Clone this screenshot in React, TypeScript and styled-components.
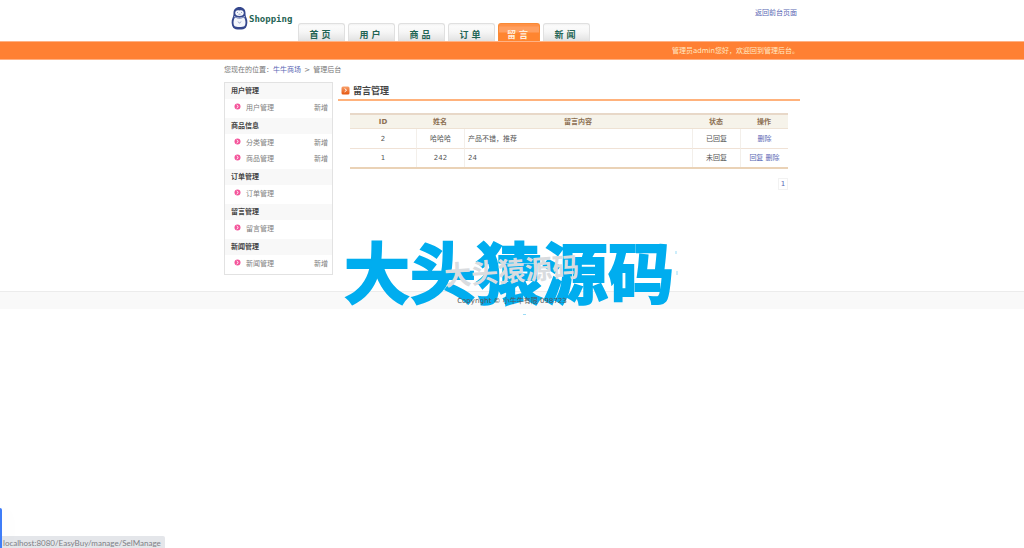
import React from "react";
import styled, { createGlobalStyle } from "styled-components";

const GlobalStyle = createGlobalStyle`
  * { box-sizing: border-box; }
  body {
    margin: 0;
    background: #fff;
    color: #555;
    font: 7px/16px "DejaVu Sans", "Noto Sans CJK SC", sans-serif;
  }
  a { color: #5a68b4; text-decoration: none; }
  ul, dl, dd, h1, h2, p { margin: 0; padding: 0; list-style: none; }
`;

const Page = styled.div`
  position: relative;
  min-height: 100vh;
`;

const Wrap = styled.div`
  width: 576px;
  max-width: 100%;
  margin: 0 auto;
`;

const Header = styled(Wrap)`
  display: flex;
  height: 41px;
`;

const Logo = styled.a`
  display: flex;
  align-items: flex-start;
  gap: 1px;
  width: 74px;
  padding: 6px 0 0 7px;
  flex: none;
`;

const Brand = styled.span`
  padding-top: 5px;
  color: #1f6453;
  font: bold 9px/16px "DejaVu Sans Mono", monospace;
`;

const Nav = styled.nav`
  display: flex;
  align-items: flex-end;
  gap: 3px;
  flex: 1;
`;

const Tab = styled.a<{ $active?: boolean }>`
  width: ${(p) => (p.$active ? 42 : 47)}px;
  height: 18px;
  padding: 3px 3px 0 0;
  border: 1px solid ${(p) => (p.$active ? "#f98a35" : "#e0e0e0")};
  border-bottom: 0;
  border-radius: 3px 3px 0 0;
  background: ${(p) =>
    p.$active
      ? "linear-gradient(#ff9147 0 2px, #ff9f60 3px 8px, #ff8530 9px)"
      : "linear-gradient(#f1f1f1 0, #fbfbfb 2px, #f6f6f6 8px, #e2e2e2)"};
  color: ${(p) => (p.$active ? "#ffeedd" : "#1f6453")};
  font-size: 9px;
  line-height: 16px;
  font-weight: bold;
  text-align: center;
`;

const BackLink = styled.a`
  padding: 5px 3px 0 0;
`;

const Bar = styled.div`
  height: 19px;
  border-top: 1px solid #ffb184;
  border-bottom: 1px solid #ffb184;
  background: #ff8033;
`;

const Welcome = styled(Wrap)`
  padding-right: 1px;
  color: #ffe9c4;
  line-height: 18px;
  text-align: right;
`;

const Crumbs = styled(Wrap)`
  padding: 2px 0 4px;
  color: #777;
  span { margin: 0 1px; }
`;

const Columns = styled(Wrap)`
  display: flex;
  align-items: flex-start;
  gap: 5px;
`;

const Sidebar = styled.aside`
  width: 109px;
  flex: none;
  border: 1px solid #e2e2e2;
`;

const GroupTitle = styled.h2`
  padding-left: 6px;
  background: #f8f8f8;
  color: #444;
  font-size: 7px;
  line-height: 16px;
`;

const GroupList = styled.ul`
  padding: 1px 0 2px;
`;

const GroupItem = styled.li`
  display: flex;
  align-items: center;
  padding: 0 4px 0 9px;
  a { color: #808080; }
  svg { margin: 0 5px 4px 0; }
  a:nth-of-type(2) { margin-left: auto; }
`;

const Main = styled.main`
  flex: 1;
`;

const Title = styled.h1`
  display: flex;
  align-items: center;
  gap: 3px;
  height: 19px;
  padding-left: 3px;
  border-bottom: 2px solid #ffb27c;
  color: #444;
  font-size: 9px;
  svg { margin-bottom: 1px; }
`;

const Body = styled.div`
  padding: 12px 12px 0;
`;

const Table = styled.table`
  width: 100%;
  table-layout: fixed;
  border-collapse: separate;
  border-spacing: 0;
  border-top: 2px solid #e8d8c8;
  border-bottom: 2px solid #ead2b6;
`;

const Th = styled.th<{ $w?: number }>`
  width: ${(p) => (p.$w ? p.$w + "px" : "auto")};
  height: 14px;
  padding: 0;
  background: #f6f3ea;
  border-bottom: 1px solid #eee2d4;
  color: #8c6f52;
  line-height: 12px;
`;

const Td = styled.td<{ $left?: boolean }>`
  height: 19px;
  padding: 0 3px;
  border-left: 1px solid #f3efea;
  text-align: ${(p) => (p.$left ? "left" : "center")};
  &:first-child { border-left: 0; }
  tr + tr > & { border-top: 1px solid #f0e2d6; }
`;

const Pager = styled.div`
  display: flex;
  justify-content: flex-end;
  padding-top: 9px;
`;

const PageLink = styled.a`
  width: 10px;
  border: 1px solid #f2f2f2;
  line-height: 10px;
  text-align: center;
`;

const Footer = styled.footer`
  margin-top: 16px;
  height: 18px;
  border-top: 1px solid #ececec;
  background: #f9f9f9;
  line-height: 18px;
  text-align: center;
  span { position: relative; z-index: 1; }
`;

const Watermark = styled.div`
  position: absolute;
  top: 226px;
  left: calc(50% - 168px);
  width: 340px;
  height: 95px;
  pointer-events: none;
  white-space: nowrap;
  font-family: "Noto Sans CJK SC", sans-serif;
`;

const BigMark = styled.p`
  color: #00adef;
  font-size: 66px;
  font-weight: bold;
  line-height: 86px;
  -webkit-text-stroke: 2px #00adef;
`;

const SmallMark = styled.p`
  position: absolute;
  top: 28px;
  left: 100px;
  color: #d9dcdf;
  font-size: 27px;
  font-weight: bold;
  line-height: 32px;
  transform: rotate(-4deg);
`;

const Specks = styled.svg`
  position: absolute;
  inset: 0;
`;

const Status = styled.div`
  position: fixed;
  left: 0;
  bottom: 0;
  height: 12px;
  padding: 0 4px 0 3px;
  border-radius: 0 2px 0 0;
  background: #e4e6ea;
  color: #7d8085;
  font: 8px/15px Lato, sans-serif;
`;

const SideHandle = styled.div`
  position: fixed;
  left: 0;
  bottom: 0;
  width: 2px;
  height: 40px;
  border-radius: 0 2px 0 0;
  background: #3f7df8;
  box-shadow: 0 0 24px rgba(0, 0, 0, 0.12);
  z-index: 1;
`;

const Penguin = () => (
  <svg width="17" height="25" viewBox="0 0 17 25" aria-hidden="true">
    <path d="M8.500 1C4.800 1 2.500 3.500 2.500 7c0 2-.2 3.300-1 5C.2 14.500.3 19 2.200 21.700 4 24.200 13 24.200 14.800 21.700c1.900-2.700 2-7.200.7-9.700C14.700 10.300 14.500 9 14.500 7c0-3.500-2.300-6-6-6z" fill="#35478d" />
    <path d="M8.500 4.500c-2.500-1-4.300.3-4.300 2.500 0 2 1.700 3 4.300 3s4.300-1 4.300-3c0-2.200-1.800-3.500-4.300-2.500z" fill="#f4f6fb" />
    <path d="M3.800 11.500c2.900 1.400 6.500 1.400 9.400 0 1.500 2.600 1.800 6.500.4 8.400-2 1.500-8.200 1.500-10.200 0-1.400-1.900-1.100-5.800.4-8.400z" fill="#f4f6fb" />
    <path d="M6 6.500h1M10 6.500h1M7.500 8.200h2M7 15.500l1.500 1.800 1.500-1.800" stroke="#7d8bbd" fill="none" strokeWidth=".8" />
    <path d="M2.900 10.300c3 2 8.200 2 11.200 0" stroke="#a9b4d5" fill="none" />
  </svg>
);

const Bullet = () => (
  <svg width="7" height="7" viewBox="0 0 7 7" aria-hidden="true">
    <circle cx="3.500" cy="3.500" r="3" fill="#f4559b" />
    <path d="M2.700 2l1.600 1.500L2.700 5" stroke="#fff" fill="none" />
  </svg>
);

const TitleIcon = () => (
  <svg width="9" height="9" viewBox="0 0 9 9" aria-hidden="true">
    <defs>
      <linearGradient id="cube" x1="0" y1="0" x2="0" y2="1">
        <stop offset="0" stopColor="#f9a06a" />
        <stop offset="1" stopColor="#e4560f" />
      </linearGradient>
    </defs>
    <rect x=".5" y=".5" width="8" height="8" rx="1.500" fill="url(#cube)" />
    <path d="M3.600 2.500l2 1.700-2 1.700" stroke="#fff" fill="none" />
  </svg>
);

const tabs = ["首 页", "用 户", "商 品", "订 单", "留 言", "新 闻"];

const groups = [
  { title: "用户管理", items: [{ name: "用户管理", add: true }] },
  { title: "商品信息", items: [{ name: "分类管理", add: true }, { name: "商品管理", add: true }] },
  { title: "订单管理", items: [{ name: "订单管理", add: false }] },
  { title: "留言管理", items: [{ name: "留言管理", add: false }] },
  { title: "新闻管理", items: [{ name: "新闻管理", add: true }] },
];

const rows = [
  { id: 2, name: "哈哈哈", text: "产品不错，推荐", state: "已回复", reply: false },
  { id: 1, name: "242", text: "24", state: "未回复", reply: true },
];

export default function App() {
  return (
    <Page>
      <GlobalStyle />
      <Header as="header">
        <Logo href="#">
          <Penguin />
          <Brand>Shopping</Brand>
        </Logo>
        <Nav>
          {tabs.map((t) => (
            <Tab key={t} href="#" $active={t === "留 言"}>{t}</Tab>
          ))}
        </Nav>
        <BackLink href="#">返回前台页面</BackLink>
      </Header>
      <Bar>
        <Welcome>管理员admin您好，欢迎回到管理后台。</Welcome>
      </Bar>
      <Crumbs>
        您现在的位置：<a href="#">牛牛商场</a> <span>&gt;</span> 管理后台
      </Crumbs>
      <Columns>
        <Sidebar>
          {groups.map((g) => (
            <section key={g.title}>
              <GroupTitle>{g.title}</GroupTitle>
              <GroupList>
                {g.items.map((i) => (
                  <GroupItem key={i.name}>
                    <Bullet />
                    <a href="#">{i.name}</a>
                    {i.add && <a href="#">新增</a>}
                  </GroupItem>
                ))}
              </GroupList>
            </section>
          ))}
        </Sidebar>
        <Main>
          <Title><TitleIcon />留言管理</Title>
          <Body>
            <Table>
              <thead>
                <tr>
                  <Th $w={66}>ID</Th>
                  <Th $w={48}>姓名</Th>
                  <Th>留言内容</Th>
                  <Th $w={48}>状态</Th>
                  <Th $w={48}>操作</Th>
                </tr>
              </thead>
              <tbody>
                {rows.map((r) => (
                  <tr key={r.id}>
                    <Td>{r.id}</Td>
                    <Td>{r.name}</Td>
                    <Td $left>{r.text}</Td>
                    <Td>{r.state}</Td>
                    <Td>
                      {r.reply && <><a href="#">回复</a>{" "}</>}
                      <a href="#">删除</a>
                    </Td>
                  </tr>
                ))}
              </tbody>
            </Table>
            <Pager><PageLink href="#">1</PageLink></Pager>
          </Body>
        </Main>
      </Columns>
      <Footer><span>Copyright © 小牛牛有限 098723</span></Footer>
      <Watermark>
        <BigMark>大头猿源码</BigMark>
        <SmallMark>大头猿源码</SmallMark>
        <Specks width="340" height="95" viewBox="0 0 340 95" aria-hidden="true">
          <path d="M332 25v3M333 45v4M179 88.500h3" stroke="#9bdcf7" />
        </Specks>
      </Watermark>
      <SideHandle />
      <Status>localhost:8080/EasyBuy/manage/SelManage</Status>
    </Page>
  );
}
